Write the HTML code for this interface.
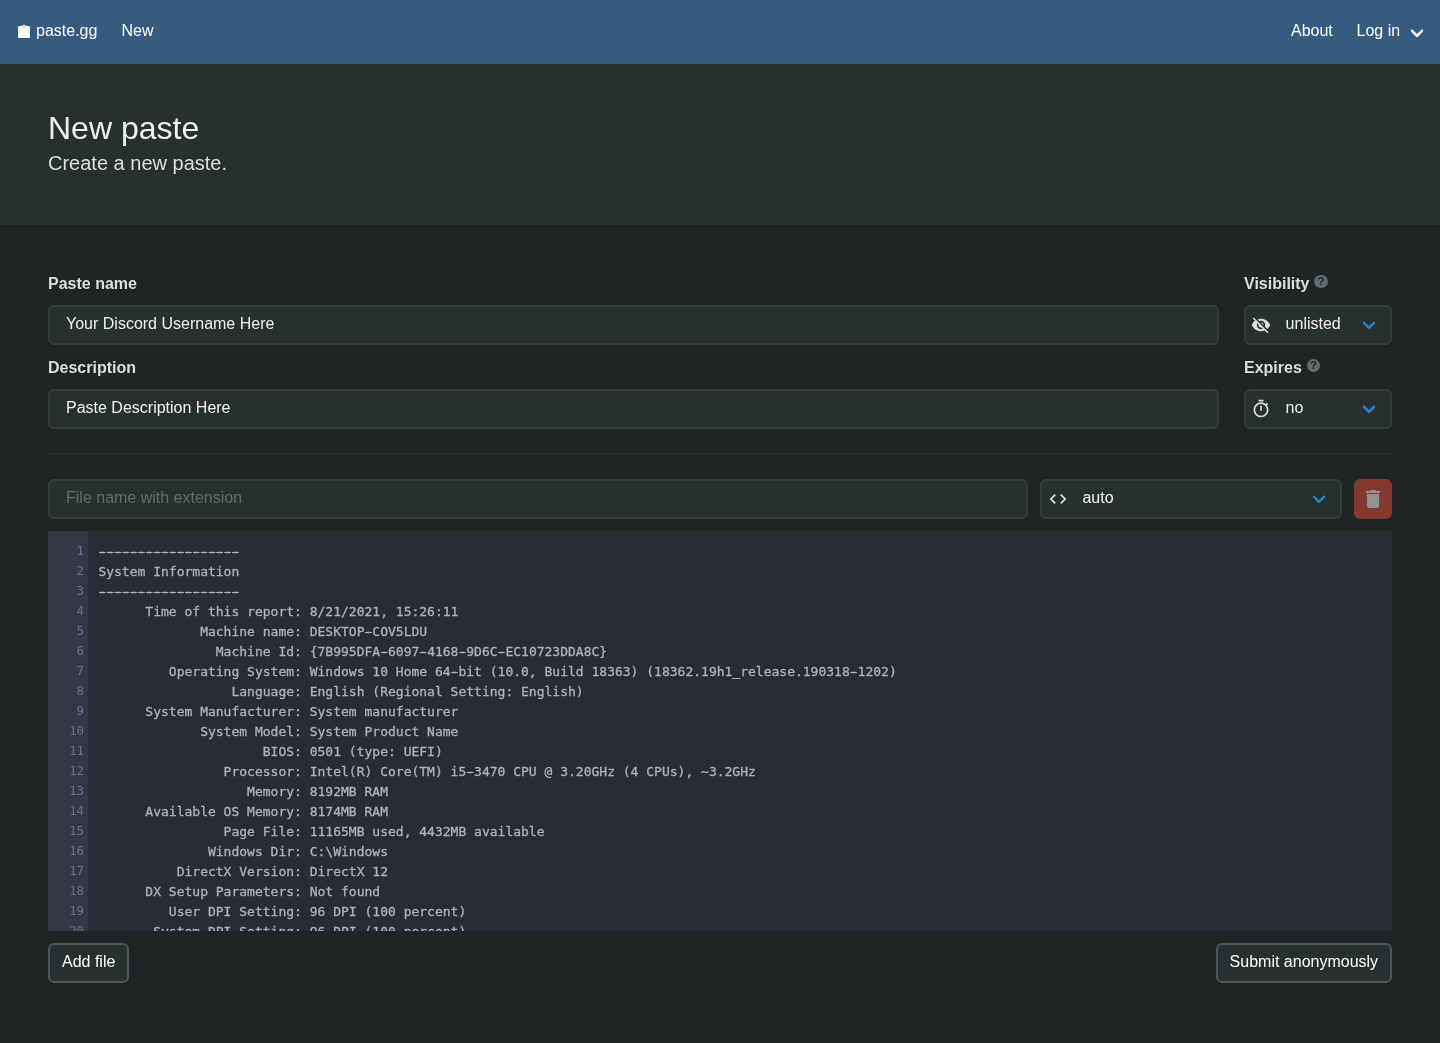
<!DOCTYPE html>
<html lang="en">
<head>
<meta charset="utf-8">
<title>New paste - paste.gg</title>
<style>
*{box-sizing:border-box;margin:0;padding:0}
html,body{width:1440px;height:1043px;overflow:hidden;background:#1f2424;color:#fff;font-family:"Liberation Sans",Arial,sans-serif;font-size:16px;line-height:24px}
.abs{position:absolute}
#nav{position:absolute;left:0;top:0;width:1440px;height:64px;background:#375a7f}
#nav .it{position:absolute;top:19px;line-height:24px;font-size:16px;color:#fff;white-space:nowrap}
#hero{position:absolute;left:0;top:64px;width:1440px;height:161px;background:#282f2f}
#hero h1{position:absolute;left:48px;top:108px;font-size:32px;line-height:40px;font-weight:400;color:#ecf0f1;top:44px}
#hero h2{position:absolute;left:48px;top:87px;font-size:20px;line-height:25px;font-weight:400;color:#dbdee0}
.label{position:absolute;font-weight:700;font-size:16px;line-height:24px;color:#dbdee0;white-space:nowrap}
.input{position:absolute;height:40px;background:#282f2f;border:2px solid #343c3d;border-radius:6px;color:#eef1f2;font-size:16px;line-height:24px;padding:5px 16px;white-space:nowrap;overflow:hidden}
.input.ph{color:#5e6d6f}
.btn{position:absolute;height:40px;background:#282f2f;border:2px solid #4c5759;border-radius:6px;color:#fff;font-size:16px;line-height:24px;padding:5px 12px;white-space:nowrap;text-align:center}
.sel .txt{position:absolute;left:40px;top:5px}
.sel svg{position:absolute}

.arrow{position:absolute;width:10px;height:10px;border:3.300px solid #2480c4;border-radius:2px;border-right:0;border-top:0;transform:rotate(-45deg);transform-origin:center}
.ic{position:absolute;fill:#dbdee0}
.h{position:relative;top:-.400px;text-shadow:1px 0 0 #abb2bf,-1px 0 0 #abb2bf,1.700px 0 0 #abb2bf,-1.700px 0 0 #abb2bf}
.help{position:absolute;width:13.340px;height:13.340px;border-radius:50%;background:#5e6d6f;color:#1f2424;font-weight:700;font-size:11.500px;line-height:13.800px;text-align:center}
#hr{position:absolute;left:48px;top:453px;width:1344px;height:2px;background:#282f2f}
#del{position:absolute;left:1354px;top:479px;width:38px;height:40px;background:#e74c3c;border-radius:6px;opacity:.5}
#ed{position:absolute;left:48px;top:531px;width:1344px;height:400px;background:#282c34;overflow:hidden;font-family:"DejaVu Sans Mono","Liberation Mono",monospace;font-size:13px;line-height:20px}
#gut{position:absolute;left:0;top:0;width:40px;height:400px;background:#333844}
#ln{position:absolute;left:0;top:10.300px;width:36px;text-align:right;color:#67748e;font-size:12.350px;white-space:pre}
#code{position:absolute;left:50.400px;top:11px;color:#abb2bf;white-space:pre;-webkit-text-stroke:.300px #abb2bf}
</style>
</head>
<body><div id="root" style="position:absolute;left:0;top:0;width:1440px;height:1043px;will-change:transform">
<div id="nav">
  <svg class="abs" style="left:16px;top:24px" width="16" height="16" viewBox="0 0 24 24"><path fill="#fff" d="M19,3H14.820C14.400,1.840 13.300,1 12,1C10.700,1 9.600,1.840 9.180,3H5A2,2 0 0,0 3,5V19A2,2 0 0,0 5,21H19A2,2 0 0,0 21,19V5A2,2 0 0,0 19,3M12,3A1,1 0 0,1 13,4A1,1 0 0,1 12,5A1,1 0 0,1 11,4A1,1 0 0,1 12,3"/></svg>
  <span class="it" style="left:36px">paste.gg</span>
  <span class="it" style="left:121.5px">New</span>
  <span class="it" style="left:1291px">About</span>
  <span class="it" style="left:1356.500px">Log in</span>
  <div class="arrow" style="left:1412px;top:26px;border-color:#fff"></div>
</div>
<div id="hero">
  <h1>New paste</h1>
  <h2>Create a new paste.</h2>
</div>

<div class="label" style="left:48px;top:272px">Paste name</div>
<div class="input" style="left:48px;top:305px;width:1171.400px">Your Discord Username Here</div>
<div class="label" style="left:48px;top:356px">Description</div>
<div class="input" style="left:48px;top:389px;width:1171.400px">Paste Description Here</div>

<div class="label" style="left:1244px;top:272px">Visibility</div>
<span class="help" style="left:1314.33px;top:274.83px">?</span>
<div class="input sel" style="left:1243.600px;top:305px;width:148.400px"><span class="txt">unlisted</span></div>
<svg class="ic" style="left:1251.200px;top:315px" width="20" height="20" viewBox="0 0 24 24"><path fill="#dbdee0" d="M11.830,9L15,12.160C15,12.110 15,12.050 15,12A3,3 0 0,0 12,9C11.940,9 11.890,9 11.830,9M7.530,9.800L9.080,11.350C9.030,11.560 9,11.770 9,12A3,3 0 0,0 12,15C12.220,15 12.440,14.970 12.650,14.920L14.200,16.470C13.530,16.800 12.790,17 12,17A5,5 0 0,1 7,12C7,11.210 7.200,10.470 7.530,9.800M2,4.270L4.280,6.550L4.730,7C3.080,8.300 1.780,10 1,12C2.730,16.390 7,19.500 12,19.500C13.550,19.500 15.030,19.200 16.380,18.660L16.810,19.080L19.730,22L21,20.730L3.270,3M12,7A5,5 0 0,1 17,12C17,12.640 16.870,13.260 16.640,13.820L19.570,16.750C21.070,15.500 22.270,13.860 23,12C21.270,7.610 17,4.500 12,4.500C10.600,4.500 9.260,4.750 8,5.200L10.170,7.350C10.740,7.130 11.350,7 12,7Z"/></svg>
<div class="arrow" style="left:1364px;top:318px"></div>
<div class="label" style="left:1244px;top:356px">Expires</div>
<span class="help" style="left:1306.83px;top:358.83px">?</span>
<div class="input sel" style="left:1243.600px;top:389px;width:148.400px"><span class="txt">no</span></div>
<svg class="ic" style="left:1251.200px;top:399px" width="20" height="20" viewBox="0 0 24 24"><path fill="#dbdee0" d="M12,20A7,7 0 0,1 5,13A7,7 0 0,1 12,6A7,7 0 0,1 19,13A7,7 0 0,1 12,20M19.030,7.390L20.450,5.970C20,5.460 19.550,5 19.040,4.560L17.620,6C16.070,4.740 14.120,4 12,4A9,9 0 0,0 3,13A9,9 0 0,0 12,22C17,22 21,17.970 21,13C21,10.880 20.260,8.930 19.030,7.390M11,14H13V8H11M15,1H9V3H15V1Z"/></svg>
<div class="arrow" style="left:1364px;top:402px"></div>

<div id="hr"></div>

<div class="input ph" style="left:48px;top:479px;width:980.400px">File name with extension</div>
<div class="input sel" style="left:1040.400px;top:479px;width:301.600px"><span class="txt">auto</span></div>
<svg class="ic" style="left:1048px;top:489px" width="20" height="20" viewBox="0 0 24 24"><path fill="#dbdee0" d="M14.600,16.600L19.200,12L14.600,7.400L16,6L22,12L16,18L14.600,16.600M9.400,16.600L4.800,12L9.400,7.400L8,6L2,12L8,18L9.400,16.600Z"/></svg>
<div class="arrow" style="left:1314px;top:492px"></div>
<div id="del"><svg class="ic" style="left:7px;top:8px" width="24" height="24" viewBox="0 0 24 24"><path fill="#fff" d="M19,4H15.500L14.500,3H9.500L8.500,4H5V6H19M6,19A2,2 0 0,0 8,21H16A2,2 0 0,0 18,19V7H6V19Z"/></svg></div>

<div id="ed">
<div id="gut"></div>
<div id="ln">1
2
3
4
5
6
7
8
9
10
11
12
13
14
15
16
17
18
19
20</div>
<div id="code"><span class="h">-</span><span class="h">-</span><span class="h">-</span><span class="h">-</span><span class="h">-</span><span class="h">-</span><span class="h">-</span><span class="h">-</span><span class="h">-</span><span class="h">-</span><span class="h">-</span><span class="h">-</span><span class="h">-</span><span class="h">-</span><span class="h">-</span><span class="h">-</span><span class="h">-</span><span class="h">-</span>
System Information
<span class="h">-</span><span class="h">-</span><span class="h">-</span><span class="h">-</span><span class="h">-</span><span class="h">-</span><span class="h">-</span><span class="h">-</span><span class="h">-</span><span class="h">-</span><span class="h">-</span><span class="h">-</span><span class="h">-</span><span class="h">-</span><span class="h">-</span><span class="h">-</span><span class="h">-</span><span class="h">-</span>
      Time of this report: 8/21/2021, 15:26:11
             Machine name: DESKTOP<span class="h">-</span>COV5LDU
               Machine Id: {7B995DFA<span class="h">-</span>6097<span class="h">-</span>4168<span class="h">-</span>9D6C<span class="h">-</span>EC10723DDA8C}
         Operating System: Windows 10 Home 64<span class="h">-</span>bit (10.0, Build 18363) (18362.19h1_release.190318<span class="h">-</span>1202)
                 Language: English (Regional Setting: English)
      System Manufacturer: System manufacturer
             System Model: System Product Name
                     BIOS: 0501 (type: UEFI)
                Processor: Intel(R) Core(TM) i5<span class="h">-</span>3470 CPU @ 3.20GHz (4 CPUs), ~3.2GHz
                   Memory: 8192MB RAM
      Available OS Memory: 8174MB RAM
                Page File: 11165MB used, 4432MB available
              Windows Dir: C:\Windows
          DirectX Version: DirectX 12
      DX Setup Parameters: Not found
         User DPI Setting: 96 DPI (100 percent)
       System DPI Setting: 96 DPI (100 percent)</div>
</div>

<div class="btn" style="left:48px;top:943px;width:81.300px">Add file</div>
<div class="btn" style="left:1215.600px;top:943px;width:176.400px">Submit anonymously</div>
</div></body>
</html>
